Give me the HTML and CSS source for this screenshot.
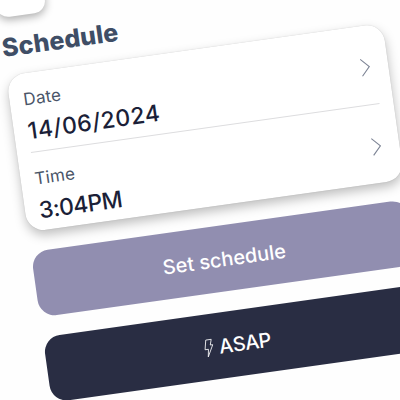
FILE: index.html
```html
<!DOCTYPE html>
<html lang="en">
<head>
    <meta charset="UTF-8">
    <meta name="viewport" content="width=device-width, initial-scale=1.0">
    <title>Schedule</title>
    <link rel="stylesheet" href="styles.css">
</head>
<body>
    <main class="screen">
        <button class="back-btn" aria-label="Back"></button>

        <h1>Schedule</h1>

        <div class="card">
            <div class="row">
                <div class="field">
                    <span class="label">Date</span>
                    <span class="value date-value">14/06/2024</span>
                </div>
                <svg class="chevron" viewBox="0 0 10 19"><path d="M1 1 L9 9.5 L1 18"/></svg>
            </div>
            <div class="row">
                <div class="field">
                    <span class="label">Time</span>
                    <span class="value time-value">3:04PM</span>
                </div>
                <svg class="chevron" viewBox="0 0 10 19"><path d="M1 1 L9 9.5 L1 18"/></svg>
            </div>
        </div>

        <button class="btn set-btn">Set schedule</button>
        <button class="btn asap-btn">
            <svg class="bolt" viewBox="0 0 10 20"><path d="M3 1.5 H8.5 L6.8 7 H9.3 L3.2 18.5 L4.4 11 H1 Z"/></svg>
            <span>ASAP</span>
        </button>
    </main>
</body>
</html>
```

FILE: styles.css
```css
html {
    overflow: hidden;
}

body {
    font-family: 'Inter', sans-serif;
    background-color: #fefefe;
    margin: 0;
    height: 400px;
    overflow: hidden;
}

/* whole screen is tilted */
.screen {
    display: flex;
    flex-direction: column;
    width: 380px;
    margin-left: -4px;
    margin-top: -30px;
    transform: translateX(-0.6px) rotate(-8deg);
    transform-origin: 4px 30px;
}

.back-btn {
    width: 49px;
    height: 48px;
    border: none;
    border-radius: 12px;
    background-color: #ffffff;
    box-shadow: 0 3px 8px rgba(0, 0, 0, 0.32);
}

h1 {
    margin: 15px 0 13px;
    height: 30px;
    line-height: 30px;
    font-size: 25px;
    font-weight: 800;
    letter-spacing: 0.1px;
    color: #3f4e66;
}

.card {
    box-sizing: border-box;
    height: 158px;
    padding: 0 14px;
    border-radius: 18px;
    background-color: #ffffff;
    box-shadow: 0 0 1px rgba(0, 0, 0, 0.2), 0 5px 11px rgba(0, 0, 0, 0.25);
}

.row {
    box-sizing: border-box;
    display: flex;
    justify-content: space-between;
    height: 79px;
    padding-top: 16px;
}

.row + .row {
    border-top: 1px solid #dddddf;
}

.field {
    display: flex;
    flex-direction: column;
}

.label {
    height: 20px;
    line-height: 20px;
    font-size: 17px;
    letter-spacing: 0.2px;
    color: #4a5568;
}

.value {
    height: 28px;
    margin-top: 8px;
    line-height: 28px;
    font-size: 23px;
    font-weight: 500;
    color: #1b1f38;
}

.date-value {
    letter-spacing: 0.45px;
}

.time-value {
    letter-spacing: -0.6px;
}

.chevron {
    width: 10px;
    height: 19px;
    margin: 16px 4px 0 0;
    fill: none;
    stroke: #7d8495;
    stroke-width: 1.1;
}

.btn {
    display: flex;
    align-items: center;
    justify-content: center;
    height: 66px;
    margin-top: 20px;
    padding: 2px 0 0 1px;
    border: none;
    border-radius: 17px;
    font-family: inherit;
    font-size: 20px;
    font-weight: 500;
    color: #ffffff;
}

.set-btn {
    background-color: #918eb0;
}

.asap-btn {
    gap: 5px;
    padding-left: 4px;
    letter-spacing: -0.4px;
    background-color: #292d43;
}

.bolt {
    width: 10px;
    height: 20px;
    fill: none;
    stroke: #ffffff;
    stroke-width: 0.8;
}
```
